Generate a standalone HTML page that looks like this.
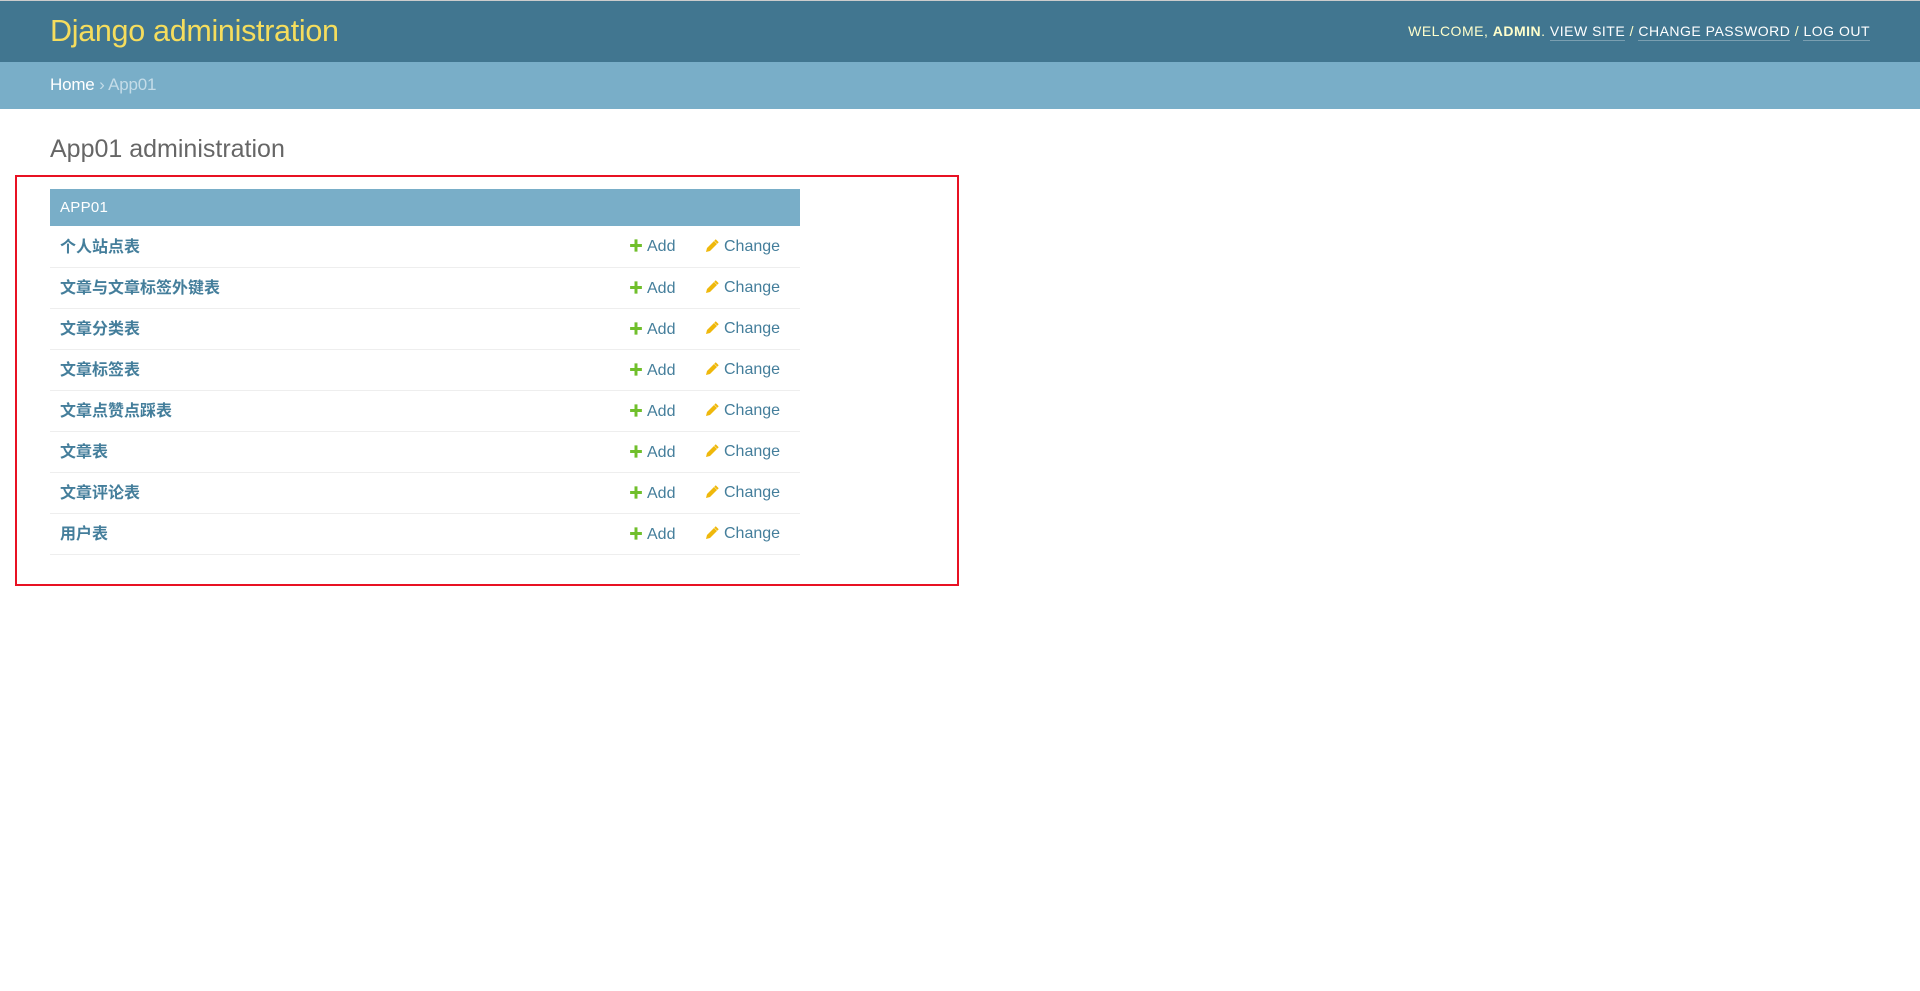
<!DOCTYPE html>
<html><head><meta charset="utf-8"><style>
*{margin:0;padding:0;box-sizing:border-box}
body{width:1920px;height:991px;background:#fff;font-family:"Liberation Sans","Noto Sans CJK SC",sans-serif;position:relative;overflow:hidden}
#header{position:absolute;left:0;top:0;width:1920px;height:62px;background:#417690;border-top:1px solid #ccc}
#brand{position:absolute;left:50px;top:13px;font-size:30.5px;color:#f5dd5d;font-weight:300;letter-spacing:-0.3px}
#tools{position:absolute;right:50px;top:22px;font-size:14px;color:#ffc;letter-spacing:0.5px}
#tools b{font-weight:bold}
#tools a{color:#fff;text-decoration:none;border-bottom:1px solid rgba(255,255,255,0.3);padding-bottom:1px}
#crumbs{position:absolute;left:0;top:62px;width:1920px;height:47px;background:#79aec8;color:#c4dce8;font-size:17px;padding:13px 50px;letter-spacing:-0.2px}
#crumbs a{color:#fff}
h1{position:absolute;left:50px;top:135px;font-size:25px;font-weight:300;color:#666}
#red{position:absolute;left:15px;top:175px;width:944px;height:411px;border:2px solid #e81123}
table{position:absolute;left:50px;top:189px;width:750px;border-collapse:collapse;table-layout:fixed}
caption{background:#79aec8;color:#fff;text-align:left;font-size:15px;height:37px;line-height:37px;padding-left:10px;letter-spacing:0.3px}
td,th{height:41px;border-bottom:1px solid #eee;font-size:16px;vertical-align:middle;white-space:nowrap;line-height:20px}
th{text-align:left;padding-left:10px;color:#447e9b;font-weight:bold;padding-top:3px}
td{color:#447e9b;padding-top:1px}
col.a{width:76px}
col.c{width:95px}
.p{color:#70bf2b;font-weight:bold;margin-right:4px;font-size:14px}
.pen{display:inline-block;margin-right:5px;position:relative;top:2px}
</style></head><body>
<div id="header"><div id="brand">Django administration</div>
<div id="tools">WELCOME, <b>ADMIN</b>. <a>VIEW SITE</a> / <a>CHANGE PASSWORD</a> / <a>LOG OUT</a></div></div>
<div id="crumbs"><a>Home</a> › App01</div>
<h1>App01 administration</h1>
<div id="red"></div>
<table><caption>APP01</caption>
<colgroup><col><col class="a"><col class="c"></colgroup>
<tr><th>个人站点表</th><td><span class="p">✚</span>Add</td><td><svg class="pen" width="14" height="14" viewBox="0 0 14 14"><path d="M1 13l1-4 7-7 3 3-7 7z" fill="#efb80b"/><path d="M10 1l3 3" stroke="#efb80b" stroke-width="2"/></svg>Change</td></tr>
<tr><th>文章与文章标签外键表</th><td><span class="p">✚</span>Add</td><td><svg class="pen" width="14" height="14" viewBox="0 0 14 14"><path d="M1 13l1-4 7-7 3 3-7 7z" fill="#efb80b"/><path d="M10 1l3 3" stroke="#efb80b" stroke-width="2"/></svg>Change</td></tr>
<tr><th>文章分类表</th><td><span class="p">✚</span>Add</td><td><svg class="pen" width="14" height="14" viewBox="0 0 14 14"><path d="M1 13l1-4 7-7 3 3-7 7z" fill="#efb80b"/><path d="M10 1l3 3" stroke="#efb80b" stroke-width="2"/></svg>Change</td></tr>
<tr><th>文章标签表</th><td><span class="p">✚</span>Add</td><td><svg class="pen" width="14" height="14" viewBox="0 0 14 14"><path d="M1 13l1-4 7-7 3 3-7 7z" fill="#efb80b"/><path d="M10 1l3 3" stroke="#efb80b" stroke-width="2"/></svg>Change</td></tr>
<tr><th>文章点赞点踩表</th><td><span class="p">✚</span>Add</td><td><svg class="pen" width="14" height="14" viewBox="0 0 14 14"><path d="M1 13l1-4 7-7 3 3-7 7z" fill="#efb80b"/><path d="M10 1l3 3" stroke="#efb80b" stroke-width="2"/></svg>Change</td></tr>
<tr><th>文章表</th><td><span class="p">✚</span>Add</td><td><svg class="pen" width="14" height="14" viewBox="0 0 14 14"><path d="M1 13l1-4 7-7 3 3-7 7z" fill="#efb80b"/><path d="M10 1l3 3" stroke="#efb80b" stroke-width="2"/></svg>Change</td></tr>
<tr><th>文章评论表</th><td><span class="p">✚</span>Add</td><td><svg class="pen" width="14" height="14" viewBox="0 0 14 14"><path d="M1 13l1-4 7-7 3 3-7 7z" fill="#efb80b"/><path d="M10 1l3 3" stroke="#efb80b" stroke-width="2"/></svg>Change</td></tr>
<tr><th>用户表</th><td><span class="p">✚</span>Add</td><td><svg class="pen" width="14" height="14" viewBox="0 0 14 14"><path d="M1 13l1-4 7-7 3 3-7 7z" fill="#efb80b"/><path d="M10 1l3 3" stroke="#efb80b" stroke-width="2"/></svg>Change</td></tr>
</table>
</body></html>
